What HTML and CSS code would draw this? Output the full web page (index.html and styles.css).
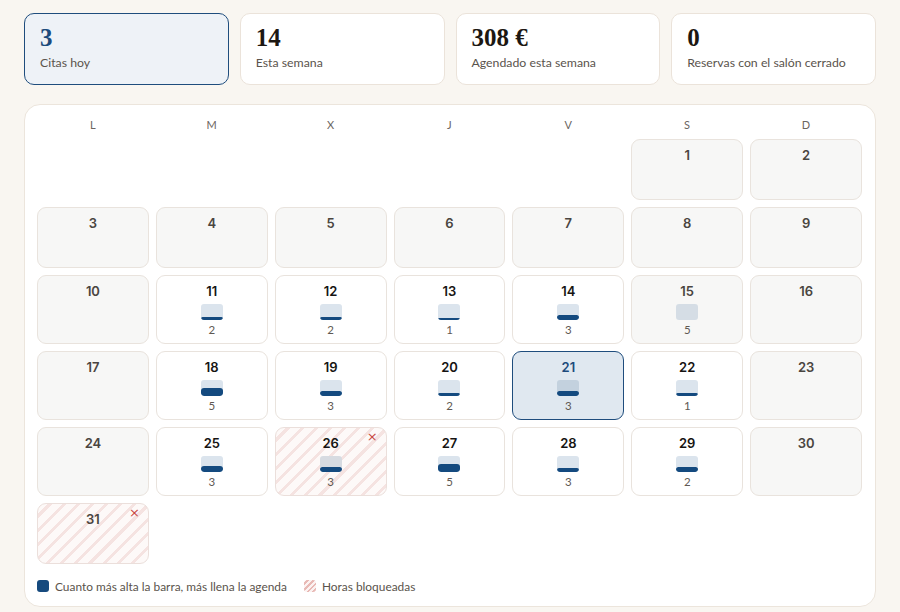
FILE: index.html
```html
<!DOCTYPE html>
<html lang="es">
<head>
<meta charset="utf-8">
<title>Agenda</title>
<link rel="stylesheet" href="styles.css">
</head>
<body>
<div class="page">
  <section class="stats">
    <div class="stat stat-active"><div class="stat-num">3</div><div class="stat-label">Citas hoy</div></div>
    <div class="stat"><div class="stat-num">14</div><div class="stat-label">Esta semana</div></div>
    <div class="stat"><div class="stat-num">308 €</div><div class="stat-label">Agendado esta semana</div></div>
    <div class="stat"><div class="stat-num">0</div><div class="stat-label">Reservas con el salón cerrado</div></div>
  </section>

  <section class="panel">
    <div class="weekdays">
      <span>L</span><span>M</span><span>X</span><span>J</span><span>V</span><span>S</span><span>D</span>
    </div>
    <div class="grid">
      <div class="blank"></div><div class="blank"></div><div class="blank"></div><div class="blank"></div><div class="blank"></div>
      <div class="day empty"><span class="num">1</span></div>
      <div class="day empty"><span class="num">2</span></div>

      <div class="day empty"><span class="num">3</span></div>
      <div class="day empty"><span class="num">4</span></div>
      <div class="day empty"><span class="num">5</span></div>
      <div class="day empty"><span class="num">6</span></div>
      <div class="day empty"><span class="num">7</span></div>
      <div class="day empty"><span class="num">8</span></div>
      <div class="day empty"><span class="num">9</span></div>

      <div class="day empty"><span class="num">10</span></div>
      <div class="day"><span class="num">11</span><span class="bar"><span class="fill" style="height:3px"></span></span><span class="count">2</span></div>
      <div class="day"><span class="num">12</span><span class="bar"><span class="fill" style="height:3px"></span></span><span class="count">2</span></div>
      <div class="day"><span class="num">13</span><span class="bar"><span class="fill" style="height:2px"></span></span><span class="count">1</span></div>
      <div class="day"><span class="num">14</span><span class="bar"><span class="fill" style="height:5px"></span></span><span class="count">3</span></div>
      <div class="day closed"><span class="num">15</span><span class="bar"></span><span class="count">5</span></div>
      <div class="day empty"><span class="num">16</span></div>

      <div class="day empty"><span class="num">17</span></div>
      <div class="day"><span class="num">18</span><span class="bar"><span class="fill" style="height:8px"></span></span><span class="count">5</span></div>
      <div class="day"><span class="num">19</span><span class="bar"><span class="fill" style="height:5px"></span></span><span class="count">3</span></div>
      <div class="day"><span class="num">20</span><span class="bar"><span class="fill" style="height:3px"></span></span><span class="count">2</span></div>
      <div class="day today"><span class="num">21</span><span class="bar"><span class="fill" style="height:5px"></span></span><span class="count">3</span></div>
      <div class="day"><span class="num">22</span><span class="bar"><span class="fill" style="height:3px"></span></span><span class="count">1</span></div>
      <div class="day empty"><span class="num">23</span></div>

      <div class="day empty"><span class="num">24</span></div>
      <div class="day"><span class="num">25</span><span class="bar"><span class="fill" style="height:6px"></span></span><span class="count">3</span></div>
      <div class="day blocked"><span class="num">26</span><span class="x">×</span><span class="bar"><span class="fill" style="height:5px"></span></span><span class="count">3</span></div>
      <div class="day"><span class="num">27</span><span class="bar"><span class="fill" style="height:8px"></span></span><span class="count">5</span></div>
      <div class="day"><span class="num">28</span><span class="bar"><span class="fill" style="height:4px"></span></span><span class="count">3</span></div>
      <div class="day"><span class="num">29</span><span class="bar"><span class="fill" style="height:5px"></span></span><span class="count">2</span></div>
      <div class="day empty"><span class="num">30</span></div>

      <div class="day empty blocked"><span class="num">31</span><span class="x">×</span></div>
    </div>
    <div class="legend">
      <span class="sw sw-blue"></span><span class="legend-text">Cuanto más alta la barra, más llena la agenda</span>
      <span class="sw sw-stripe"></span><span class="legend-text">Horas bloqueadas</span>
    </div>
  </section>
</div>
</body>
</html>
```

FILE: styles.css
```css
* { box-sizing: border-box; }
html, body { margin: 0; padding: 0; }
body {
  background: #f9f6f1;
  font-family: "Lato", "Liberation Sans", sans-serif;
  color: #2b2622;
}
.page {
  width: 900px;
  padding: 13px 24px 0 24px;
}
.stats {
  display: grid;
  grid-template-columns: repeat(4, 1fr);
  gap: 11px;
}
.stat {
  height: 72px;
  background: #ffffff;
  border: 1px solid #ebe3da;
  border-radius: 10px;
  padding: 9px 15px 0 15px;
}
.stat-active {
  background: #eef2f7;
  border-color: #1f4d7d;
}
.stat-num {
  font-family: "Liberation Serif", "DejaVu Serif", serif;
  font-weight: 700;
  font-size: 25px;
  line-height: 29px;
  color: #1c1712;
}
.stat-active .stat-num { color: #1d4b7c; }
.stat-label {
  font-size: 12.3px;
  line-height: 16px;
  margin-top: 3px;
  color: #5a534c;
}
.panel {
  margin-top: 19px;
  background: #ffffff;
  border: 1px solid #ece5dc;
  border-radius: 16px;
  padding: 12px 13px 12px 12px;
}
.weekdays {
  display: grid;
  grid-template-columns: repeat(7, 1fr);
  gap: 7px;
  height: 16px;
  margin-bottom: 6px;
}
.weekdays span {
  text-align: center;
  font-size: 11px;
  line-height: 16px;
  color: #6b655f;
  letter-spacing: 0.3px;
}
.grid {
  display: grid;
  grid-template-columns: repeat(7, 1fr);
  gap: 7px 7px;
}
.day {
  position: relative;
  min-height: 61px;
  border: 1px solid #e9e3dd;
  border-radius: 9px;
  background: #ffffff;
  display: flex;
  flex-direction: column;
  align-items: center;
  padding: 7px 0 6px 0;
}
.num {
  font-family: "Inter", "Liberation Sans", sans-serif;
  font-weight: 600;
  font-size: 13px;
  line-height: 16px;
  color: #161412;
}
.empty { background: #f7f7f6; }
.empty .num, .closed .num { color: #4a4540; }
.closed { background: #f7f7f6; }
.bar {
  margin-top: 5px;
  width: 22px;
  height: 16px;
  border-radius: 3px;
  background: #dbe4ed;
  display: flex;
  flex-direction: column;
  justify-content: flex-end;
  overflow: hidden;
}
.closed .bar { background: #d5dde5; }
.fill {
  display: block;
  width: 100%;
  background: #144a7f;
  border-radius: 3px;
}
.count {
  margin-top: 3px;
  font-size: 11.5px;
  line-height: 14px;
  color: #5f5953;
}
.today {
  background: #e0e8f0;
  border-color: #1f4d7d;
}
.today .num { color: #1d4b7c; }
.today .bar { background: #c3d1de; }
.blocked {
  background: repeating-linear-gradient(135deg, #fdf9f8 0px, #fdf9f8 7px, #f5e3e1 7px, #f5e3e1 10px);
  border-color: #ebdfdb;
}
.blocked .bar { background: #d7dbe1; }
.x {
  position: absolute;
  top: 3px;
  right: 8px;
  font-family: "DejaVu Sans", sans-serif;
  font-size: 13px;
  line-height: 12px;
  color: #c94b43;
}
.legend {
  display: flex;
  align-items: center;
  margin-top: 14px;
  height: 16px;
}
.sw {
  width: 12px;
  height: 12px;
  border-radius: 3px;
  margin-right: 6px;
  flex: none;
}
.sw-blue { background: #164a7e; }
.sw-stripe {
  background: repeating-linear-gradient(135deg, #fbf2f1 0px, #fbf2f1 2px, #e8b9b5 2px, #e8b9b5 4px);
  margin-left: 17px;
}
.legend-text {
  font-size: 11.9px;
  color: #5a534c;
}
```
